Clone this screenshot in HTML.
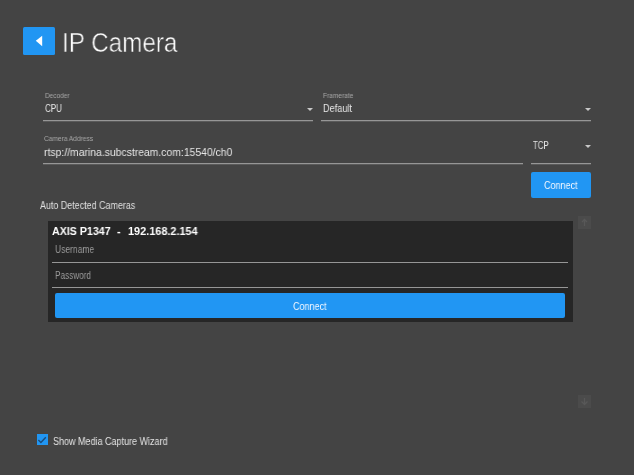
<!DOCTYPE html>
<html><head><meta charset="utf-8"><style>
html,body{margin:0;padding:0;}
body{width:634px;height:475px;background:#444444;position:relative;overflow:hidden;font-family:"Liberation Sans",sans-serif;}
.t{position:absolute;white-space:pre;will-change:transform;}
.r{position:absolute;}
</style></head><body>
<div class="r" style="left:23px;top:27px;width:32px;height:28px;background:#2196f3;border-radius:1.5px;"></div>
<svg class="r" style="left:23px;top:27px" width="32" height="28"><polygon points="12.8,13.8 19.2,8.8 19.2,19.2" fill="#fff"/></svg>
<div class="t" style="left:62.2px;top:30.04px;font-size:27px;line-height:27px;color:#ffffff;font-weight:normal;letter-spacing:0px;transform:scaleX(0.898);transform-origin:0 0;-webkit-text-stroke:0.5px #444;">IP Camera</div>
<div class="t" style="left:45px;top:92.07px;font-size:7px;line-height:7px;color:#a8a8a8;font-weight:normal;letter-spacing:0px;transform:scaleX(0.926);transform-origin:0 0;">Decoder</div>
<div class="t" style="left:45px;top:103.11px;font-size:10.5px;line-height:10.5px;color:#e6e6e6;font-weight:normal;letter-spacing:0px;transform:scaleX(0.77);transform-origin:0 0;">CPU</div>
<div class="r" style="left:43px;top:120px;width:270px;height:1px;background:#969696;box-shadow:0 1px 0 #5a5a5a;"></div>
<svg class="r" style="left:306px;top:107px" width="8" height="5"><polygon points="1,1 7,1 4,4" fill="#c8c8c8"/></svg>
<div class="t" style="left:323px;top:92.07px;font-size:7px;line-height:7px;color:#a8a8a8;font-weight:normal;letter-spacing:0px;transform:scaleX(0.94);transform-origin:0 0;">Framerate</div>
<div class="t" style="left:323px;top:103.11px;font-size:10.5px;line-height:10.5px;color:#e6e6e6;font-weight:normal;letter-spacing:0px;transform:scaleX(0.875);transform-origin:0 0;">Default</div>
<div class="r" style="left:321px;top:120px;width:270px;height:1px;background:#969696;box-shadow:0 1px 0 #5a5a5a;"></div>
<svg class="r" style="left:584px;top:107px" width="8" height="5"><polygon points="1,1 7,1 4,4" fill="#c8c8c8"/></svg>
<div class="t" style="left:44px;top:134.77px;font-size:7px;line-height:7px;color:#a8a8a8;font-weight:normal;letter-spacing:0px;transform:scaleX(0.94);transform-origin:0 0;">Camera Address</div>
<div class="t" style="left:44px;top:146.69px;font-size:11px;line-height:11px;color:#e6e6e6;font-weight:normal;letter-spacing:0px;transform:scaleX(0.945);transform-origin:0 0;">rtsp://marina.subcstream.com:15540/ch0</div>
<div class="r" style="left:43px;top:163px;width:480px;height:1px;background:#969696;box-shadow:0 1px 0 #5a5a5a;"></div>
<div class="t" style="left:533px;top:140.53px;font-size:10px;line-height:10px;color:#e6e6e6;font-weight:normal;letter-spacing:0px;transform:scaleX(0.79);transform-origin:0 0;">TCP</div>
<svg class="r" style="left:584px;top:144px" width="8" height="5"><polygon points="1,1 7,1 4,4" fill="#c8c8c8"/></svg>
<div class="r" style="left:531px;top:163px;width:60px;height:1px;background:#969696;box-shadow:0 1px 0 #5a5a5a;"></div>
<div class="r" style="left:531px;top:172px;width:60px;height:26px;background:#2196f3;border-radius:2px;"></div>
<div class="t" style="left:544.2px;top:180.53px;font-size:10px;line-height:10px;color:#f4f8ff;font-weight:normal;letter-spacing:0px;transform:scaleX(0.9);transform-origin:0 0;">Connect</div>
<div class="t" style="left:40px;top:200.11px;font-size:10.5px;line-height:10.5px;color:#e0e0e0;font-weight:normal;letter-spacing:0px;transform:scaleX(0.85);transform-origin:0 0;">Auto Detected Cameras</div>
<div class="r" style="left:48px;top:221px;width:525px;height:101px;background:#262626;"></div>
<div class="t" style="left:52px;top:225.69px;font-size:11px;line-height:11px;color:#ffffff;font-weight:bold;letter-spacing:0px;transform:scaleX(0.968);transform-origin:0 0;">AXIS P1347</div>
<div class="t" style="left:116.8px;top:225.69px;font-size:11px;line-height:11px;color:#ffffff;font-weight:bold;letter-spacing:0px;">-</div>
<div class="t" style="left:127.5px;top:225.69px;font-size:11px;line-height:11px;color:#ffffff;font-weight:bold;letter-spacing:0px;transform:scaleX(0.99);transform-origin:0 0;">192.168.2.154</div>
<div class="t" style="left:55px;top:244.53px;font-size:10px;line-height:10px;color:#9a9a9a;font-weight:normal;letter-spacing:0px;transform:scaleX(0.85);transform-origin:0 0;">Username</div>
<div class="r" style="left:52px;top:262px;width:516px;height:1px;background:#969696;"></div>
<div class="t" style="left:55px;top:270.54px;font-size:10px;line-height:10px;color:#9a9a9a;font-weight:normal;letter-spacing:0px;transform:scaleX(0.82);transform-origin:0 0;">Password</div>
<div class="r" style="left:52px;top:287px;width:516px;height:1px;background:#969696;"></div>
<div class="r" style="left:55px;top:293px;width:510px;height:25.30000000000001px;background:#2196f3;border-radius:2px;"></div>
<div class="t" style="left:293.0px;top:301.54px;font-size:10px;line-height:10px;color:#f4f8ff;font-weight:normal;letter-spacing:0px;transform:scaleX(0.9);transform-origin:0 0;">Connect</div>
<div class="r" style="left:578px;top:216px;width:13px;height:13px;background:#4b4b4b;"></div>
<svg class="r" style="left:578px;top:216px" width="13" height="13"><path d="M6.5,3.5 L6.5,10 M4,6 L6.5,3.5 L9,6" fill="none" stroke="#585858" stroke-width="1.3"/></svg>
<div class="r" style="left:578px;top:395px;width:13px;height:13px;background:#4b4b4b;"></div>
<svg class="r" style="left:578px;top:395px" width="13" height="13"><path d="M6.5,3 L6.5,9.5 M3.5,6.5 L6.5,9.5 L9.5,6.5" fill="none" stroke="#585858" stroke-width="1.3"/></svg>
<div class="r" style="left:37px;top:434px;width:11px;height:11px;background:#2196f3;"></div>
<svg class="r" style="left:37px;top:434px" width="11" height="11"><polyline points="1.4,6.1 3.9,8.4 8.8,3.2" fill="none" stroke="#1a4b7a" stroke-width="1.4"/></svg>
<div class="t" style="left:53px;top:436.54px;font-size:10px;line-height:10px;color:#e4e4e4;font-weight:normal;letter-spacing:0px;transform:scaleX(0.9);transform-origin:0 0;">Show Media Capture Wizard</div>
</body></html>
